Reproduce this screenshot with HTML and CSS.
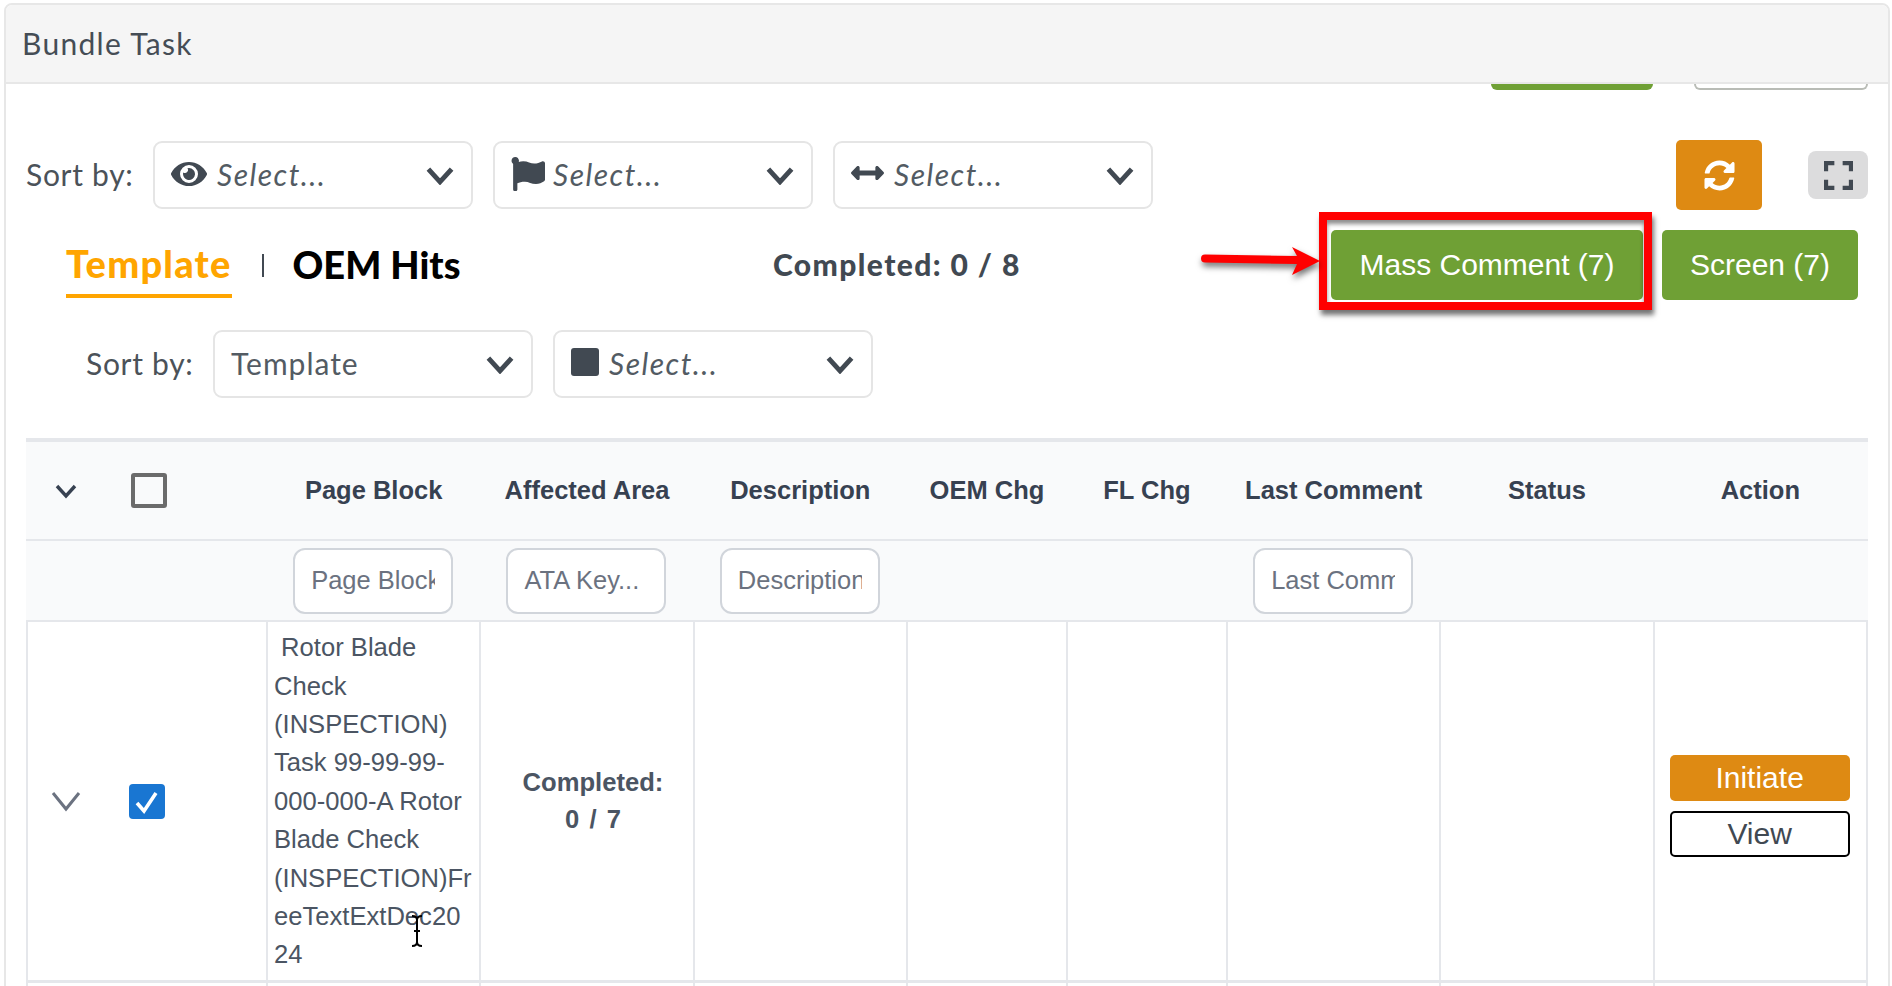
FILE: index.html
```html
<!DOCTYPE html>
<html lang="en">
<head>
<meta charset="utf-8">
<title>Bundle Task</title>
<link rel="stylesheet" href="styles.css">
</head>
<body>
<div class="panel">
  <div class="panel-head">Bundle Task</div>
  <div class="panel-body">
    <div class="clipped-row">
      <span class="clipped-green"></span>
      <span class="clipped-outline"></span>
    </div>
    <div class="toolbar">
      <span class="sort-label">Sort by:</span>
      <div class="select">
        <svg class="ico ico-eye" viewBox="0 0 576 512"><path d="M572.52 241.4C518.29 135.59 410.93 64 288 64S57.68 135.64 3.48 241.41a32.35 32.35 0 0 0 0 29.19C57.71 376.41 165.07 448 288 448s230.32-71.64 284.52-177.41a32.35 32.35 0 0 0 0-29.19zM288 400a144 144 0 1 1 144-144 143.93 143.93 0 0 1-144 144zm0-240a95.31 95.31 0 0 0-25.31 3.79 47.85 47.85 0 0 1-66.9 66.9A95.78 95.78 0 1 0 288 160z"/></svg>
        <span class="placeholder">Select...</span>
        <svg class="chev" viewBox="0 0 28 18"><path d="M3 3l11 12L25 3"/></svg>
      </div>
      <div class="select">
        <svg class="ico ico-flag" viewBox="0 0 512 512"><path d="M349.565 98.783C295.978 98.783 251.721 64 184.348 64c-24.955 0-47.309 4.384-68.045 12.013a55.947 55.947 0 0 0 3.586-23.562C118.117 24.015 94.806 1.206 66.338.048 34.345-1.254 8 24.296 8 56c0 19.026 9.497 35.825 24 45.945V488c0 13.255 10.745 24 24 24h16c13.255 0 24-10.745 24-24v-94.4c28.311-12.064 63.582-22.122 114.435-22.122 53.588 0 97.844 34.783 165.217 34.783 48.169 0 86.667-16.294 122.505-40.858C506.84 359.452 512 349.571 512 339.045v-243.1c0-23.393-24.269-38.87-45.485-29.016-34.338 15.948-76.454 31.854-116.95 31.854z"/></svg>
        <span class="placeholder ph-flag">Select...</span>
        <svg class="chev" viewBox="0 0 28 18"><path d="M3 3l11 12L25 3"/></svg>
      </div>
      <div class="select">
        <svg class="ico ico-arrows" viewBox="0 0 512 240"><path transform="translate(0 -136)" d="M377.941 169.941V216H134.059v-46.059c0-21.382-25.851-32.09-40.971-16.971L7.029 239.029c-9.373 9.373-9.373 24.569 0 33.941l86.059 86.059c15.119 15.119 40.971 4.411 40.971-16.971V296h243.882v46.059c0 21.382 25.851 32.09 40.971 16.971l86.059-86.059c9.373-9.373 9.373-24.569 0-33.941l-86.059-86.059c-15.119-15.12-40.971-4.412-40.971 16.97z"/></svg>
        <span class="placeholder">Select...</span>
        <svg class="chev" viewBox="0 0 28 18"><path d="M3 3l11 12L25 3"/></svg>
      </div>
      <button class="btn-refresh" type="button">
        <svg viewBox="0 0 512 512"><path d="M370.72 133.28C339.458 104.008 298.888 87.962 255.848 88c-77.458.068-144.328 53.178-162.791 126.85-1.344 5.363-6.122 9.15-11.651 9.15H24.103c-7.498 0-13.194-6.807-11.807-14.176C33.933 94.924 134.813 8 256 8c66.448 0 126.791 26.136 171.315 68.685L463.03 40.97C478.149 25.851 504 36.559 504 57.941V192c0 13.255-10.745 24-24 24H345.941c-21.382 0-32.09-25.851-16.971-40.971l41.75-41.749zM32 296h134.059c21.382 0 32.09 25.851 16.971 40.971l-41.75 41.75c31.262 29.273 71.835 45.319 114.876 45.28 77.418-.07 144.315-53.144 162.787-126.849 1.344-5.363 6.122-9.15 11.651-9.15h57.304c7.498 0 13.194 6.807 11.807 14.176C478.067 417.076 377.187 504 256 504c-66.448 0-126.791-26.136-171.315-68.685L48.97 471.03C33.851 486.149 8 475.441 8 454.059V320c0-13.255 10.745-24 24-24z"/></svg>
      </button>
      <button class="btn-full" type="button">
        <svg viewBox="0 0 28 28"><path d="M2 10V2h8M18 2h8v8M26 18v8h-8M10 26H2v-8"/></svg>
      </button>
    </div>
    <div class="tabs-row">
      <div class="tabs">
        <span class="tab tab-active">Template</span>
        <span class="tab-sep"></span>
        <span class="tab">OEM Hits</span>
      </div>
      <div class="completed">Completed: 0 / 8</div>
      <div class="actions">
        <button class="btn-green btn-mass" type="button">Mass Comment (7)</button>
        <button class="btn-green btn-screen" type="button">Screen (7)</button>
      </div>
      <div class="callout"></div>
      <svg class="callout-arrow" viewBox="0 0 122 40"><path d="M5 12.5L97 14 92 5l28 14-28 14 5-11-92-1.5a4 4 0 0 1 0-8z"/></svg>
    </div>
    <div class="toolbar toolbar-sub">
      <span class="sort-label">Sort by:</span>
      <div class="select">
        <span class="value">Template</span>
        <svg class="chev" viewBox="0 0 28 18"><path d="M3 3l11 12L25 3"/></svg>
      </div>
      <div class="select">
        <span class="ico-square"></span>
        <span class="placeholder">Select...</span>
        <svg class="chev" viewBox="0 0 28 18"><path d="M3 3l11 12L25 3"/></svg>
      </div>
    </div>
    <table class="grid">
      <colgroup>
        <col class="c-exp"><col class="c-chk"><col class="c-w"><col class="c-w"><col class="c-w"><col class="c-n"><col class="c-n"><col class="c-w"><col class="c-w"><col class="c-w">
      </colgroup>
      <thead>
        <tr class="head-row">
          <th class="cell-exp"><svg class="chev-sm" viewBox="0 0 24 16"><path d="M3 3l9 10 9-10"/></svg></th>
          <th class="cell-chk"><span class="check check-empty"></span></th>
          <th>Page Block</th>
          <th>Affected Area</th>
          <th>Description</th>
          <th>OEM Chg</th>
          <th>FL Chg</th>
          <th>Last Comment</th>
          <th>Status</th>
          <th>Action</th>
        </tr>
        <tr class="filter-row">
          <th></th><th></th>
          <th><input class="filter" type="text" placeholder="Page Block"></th>
          <th><input class="filter" type="text" placeholder="ATA Key..."></th>
          <th><input class="filter" type="text" placeholder="Description"></th>
          <th></th><th></th>
          <th><input class="filter" type="text" placeholder="Last Comment"></th>
          <th></th><th></th>
        </tr>
      </thead>
      <tbody>
        <tr class="data-row">
          <td class="cell-exp no-right"><svg class="chev-lg" viewBox="0 0 30 22"><path d="M2 3l13 16L28 3"/></svg></td>
          <td class="cell-chk"><span class="check check-on"><svg viewBox="0 0 36 36"><path d="M8 19l7 8 12-18"/></svg></span></td>
          <td class="cell-text">&nbsp;Rotor Blade Check (INSPECTION) Task 99-99-99-000-000-A Rotor Blade Check (INSPECTION)FreeTextExtDec2024</td>
          <td class="cell-done">Completed:<br>0 / 7</td>
          <td></td><td></td><td></td><td></td><td></td>
          <td class="cell-action">
            <button class="btn-initiate" type="button">Initiate</button>
            <button class="btn-view" type="button">View</button>
          </td>
        </tr>
        <tr class="next-row"><td class="no-right"></td><td></td><td></td><td></td><td></td><td></td><td></td><td></td><td></td><td></td></tr>
      </tbody>
    </table>
  </div>
</div>
<svg class="ibeam" viewBox="0 0 14 32"><path d="M2 1c3 0 5 1 5 4v22c0 3-2 4-5 4M12 1c-3 0-5 1-5 4v22c0 3 2 4 5 4M4 16h6"/></svg>
</body>
</html>
```

FILE: styles.css
```css
* { box-sizing: border-box; }
html, body { margin: 0; height: 986px; overflow: hidden; background: #fff; }
body { font-family: Lato, "Liberation Sans", sans-serif; color: #414952; position: relative; }

.panel {
  margin: 3px 2px 0 4px;
  height: 1100px;
  border: 2px solid #e7e7e7;
  border-radius: 8px 8px 0 0;
  overflow: hidden;
}
.panel-head {
  height: 79px;
  padding-left: 16px;
  background: #f5f5f5;
  border-bottom: 2px solid #e7e7e7;
  font-size: 30px;
  letter-spacing: 1.3px;
  line-height: 76px;
  color: #454d55;
}
.panel-body { padding: 0 20px; position: relative; }

.clipped-row { display: flex; height: 6px; margin-bottom: 50px; }
.clipped-green { margin-left: 1465px; width: 162px; height: 6px; background: #6fa035; border-radius: 0 0 6px 6px; }
.clipped-outline { margin-left: 41px; width: 174px; height: 6px; border: 2px solid #b9bcb6; border-top: 0; border-radius: 0 0 6px 6px; }

.toolbar { display: flex; align-items: center; height: 70px; gap: 20px; }
.sort-label { font-size: 30px; letter-spacing: .7px; color: #4b5259; width: 107px; white-space: nowrap; margin-top: -2px; }
.select {
  display: flex;
  align-items: center;
  width: 320px;
  height: 68px;
  padding: 0 16px;
  background: #fff;
  border: 2px solid #e5e5e5;
  border-radius: 9px;
  font-size: 30px;
  letter-spacing: 1px;
}
.placeholder { font-style: italic; color: #535b63; margin-left: 10px; letter-spacing: 1.5px; margin-top: -2px; }
.ph-flag { margin-left: 8px; }
.value { color: #535b63; margin-top: -2px; }
.chev { width: 30px; height: 19px; margin-left: auto; fill: none; stroke: #414952; stroke-width: 4.6; }
.ico { fill: #414952; flex: none; }
.ico-eye { width: 36px; height: 32px; margin-top: -3px; }
.ico-flag { width: 34px; height: 34px; margin-top: -2px; }
.ico-arrows { width: 33px; height: 16px; margin-top: -4px; }
.ico-square { width: 28px; height: 28px; background: #414952; border-radius: 3px; margin-top: -4px; flex: none; }

.btn-refresh {
  margin-left: auto;
  width: 86px;
  height: 70px;
  padding: 0;
  border: 0;
  border-radius: 5px;
  background: #de8a13;
  display: flex;
  align-items: center;
  justify-content: center;
}
.btn-refresh svg { width: 31px; height: 31px; fill: #fff; }
.btn-full {
  margin-left: 26px;
  width: 60px;
  height: 48px;
  padding: 0;
  border: 0;
  border-radius: 8px;
  background: #dcdcdd;
  display: flex;
  align-items: center;
  justify-content: center;
}
.btn-full svg { width: 29px; height: 29px; fill: none; stroke: #414952; stroke-width: 4; }

.tabs-row { display: flex; align-items: center; height: 106px; margin-top: 2px; margin-bottom: 12px; position: relative; }
.tabs { display: flex; align-items: center; margin-left: 40px; width: 707px; flex: none; }
.tab { font-size: 38px; font-weight: 900; color: #000; line-height: 49px; height: 51px; }
.tab-active { color: #ffa500; border-bottom: 4px solid #ffa500; height: 59px; margin-top: 6px; letter-spacing: 1.2px; }
.tab-sep { width: 2px; height: 23px; background: #414952; margin: 0 29px 0 30px; }
.completed { font-size: 30px; font-weight: 900; letter-spacing: 1.4px; color: #414952; width: 558px; flex: none; white-space: nowrap; margin-top: -2px; }
.actions { display: flex; gap: 19px; }
.btn-green {
  height: 70px;
  padding: 0;
  border: 0;
  border-radius: 5px;
  background: #6fa035;
  color: #fff;
  font: 30px "Liberation Sans", sans-serif;
}
.btn-mass { width: 312px; }
.btn-screen { width: 196px; }
.callout {
  position: absolute;
  left: 1293px;
  top: 0;
  width: 333px;
  height: 98px;
  border: 8px solid #f00;
  box-shadow: 2px 5px 5px rgba(0,0,0,.55), inset 0 4px 4px rgba(0,0,0,.45);
  pointer-events: none;
}
.callout-arrow {
  position: absolute;
  left: 1174px;
  top: 30px;
  width: 122px;
  height: 40px;
  fill: #f00;
  filter: drop-shadow(1px 4px 3px rgba(0,0,0,.55));
}

.toolbar-sub { padding-left: 60px; height: 68px; }

.grid {
  margin-top: 40px;
  width: 1842px;
  border-collapse: separate;
  border-spacing: 0;
  table-layout: fixed;
  font-family: "Liberation Sans", sans-serif;
  font-size: 25.6px;
}
.c-exp { width: 81px; }
.c-chk { width: 161px; }
.c-w { width: 213.33px; }
.c-n { width: 160px; }
.head-row th {
  height: 103px;
  background: #f9fafb;
  border-top: 4px solid #e5e7eb;
  border-bottom: 2px solid #e5e7eb;
  color: #374151;
  font-weight: 700;
  font-size: 25.5px;
  padding: 0 2px 0 0;
}
.filter-row th {
  height: 81px;
  background: #f9fafb;
  border-bottom: 2px solid #e5e7eb;
  padding: 0 3px 0 0;
  vertical-align: middle;
}
.filter {
  display: block;
  margin: 0 auto;
  width: 160px;
  height: 66px;
  padding: 0 16px;
  background: #fff;
  border: 2px solid #d1d5db;
  border-radius: 12px;
  font: 25.5px "Liberation Sans", sans-serif;
  color: #374151;
}
.filter::placeholder { color: #6b7280; opacity: 1; }

.data-row td, .next-row td {
  border-right: 2px solid #e5e7eb;
  border-bottom: 3px solid #e5e7eb;
  padding: 0;
}
.data-row td:first-child, .next-row td:first-child { border-left: 2px solid #e5e7eb; }
.data-row td { height: 361px; }
.next-row td { height: 60px; border-bottom: 0; }
td.no-right { border-right: 0; }
.cell-exp { text-align: center; }
.cell-chk { text-align: left; }
.chev-sm { display: block; margin: 0 auto 0 28px; width: 24px; height: 16px; fill: none; stroke: #374151; stroke-width: 3.4; }
.chev-lg { display: block; margin: 0 auto 0 23px; width: 30px; height: 22px; fill: none; stroke: #6b7280; stroke-width: 3; }
.check { display: block; width: 36px; height: 35px; }
.cell-chk .check-empty { margin-left: 24px; border: 4px solid #6b6b6b; border-radius: 3px; background: #f9fafb; }
.cell-chk .check-on { margin-left: 22px; background: #1976d2; border-radius: 4px; }
.check-on svg { display: block; width: 36px; height: 36px; fill: none; stroke: #fff; stroke-width: 3.6; }
.data-row .cell-text {
  padding: 1px 6px 1px 6px;
  line-height: 38.4px;
  color: #4b5563;
  overflow-wrap: anywhere;
}
.cell-done { text-align: center; font-weight: 700; line-height: 37.5px; color: #4b5563; word-spacing: 3px; }
.data-row .cell-done { padding: 0 0 0 12px; }
.data-row .cell-action { padding: 10px 0 0 15px; }
.btn-initiate, .btn-view {
  display: block;
  width: 180px;
  height: 46px;
  padding: 0;
  border-radius: 5px;
  font: 30px "Liberation Sans", sans-serif;
}
.btn-initiate { border: 0; background: #de8a13; color: #fff; margin-bottom: 10px; }
.btn-view { border: 2px solid #000; background: #fff; color: #414952; }

.ibeam {
  position: absolute;
  left: 410px;
  top: 915px;
  width: 14px;
  height: 32px;
  fill: none;
  stroke: #000;
  stroke-width: 2;
}
```
